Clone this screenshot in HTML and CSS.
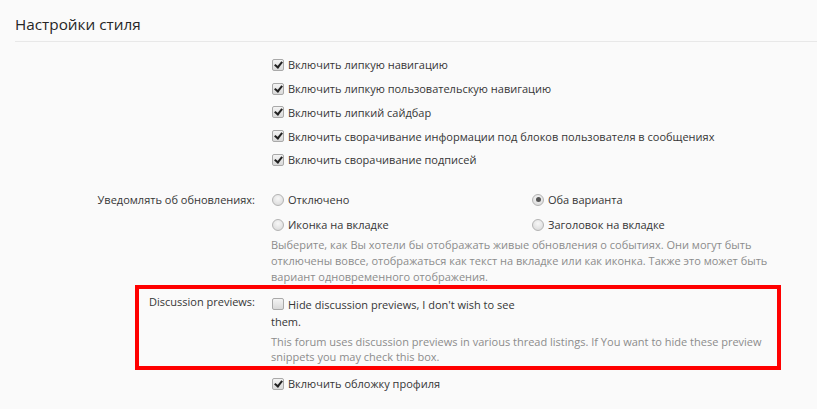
FILE: index.html
```html
<!DOCTYPE html>
<html lang="ru">
<head>
<meta charset="utf-8">
<link rel="stylesheet" href="styles.css">
</head>
<body>
<div class="page">
  <h2 class="heading">Настройки стиля</h2>
  <dl class="ctrl">
    <dt></dt>
    <dd>
      <ul class="checks">
        <li><span class="cb on"></span>Включить липкую навигацию</li>
        <li><span class="cb on"></span>Включить липкую пользовательскую навигацию</li>
        <li><span class="cb on"></span>Включить липкий сайдбар</li>
        <li><span class="cb on"></span>Включить сворачивание информации под блоков пользователя в сообщениях</li>
        <li><span class="cb on"></span>Включить сворачивание подписей</li>
      </ul>
    </dd>
  </dl>
  <dl class="ctrl notify">
    <dt>Уведомлять об обновлениях:</dt>
    <dd>
      <div class="radios">
        <div class="ropt"><span class="rb"></span>Отключено</div>
        <div class="ropt"><span class="rb on"></span>Оба варианта</div>
        <div class="ropt"><span class="rb"></span>Иконка на вкладке</div>
        <div class="ropt"><span class="rb"></span>Заголовок на вкладке</div>
      </div>
      <p class="explain">Выберите, как Вы хотели бы отображать живые обновления о событиях. Они могут быть отключены вовсе, отображаться как текст на вкладке или как иконка. Также это может быть вариант одновременного отображения.</p>
    </dd>
  </dl>
  <dl class="ctrl highlight">
    <dt>Discussion previews:</dt>
    <dd>
      <div class="narrow"><span class="cb"></span>Hide discussion previews, I don't wish to see them.</div>
      <p class="explain">This forum uses discussion previews in various thread listings. If You want to hide these preview snippets you may check this box.</p>
    </dd>
  </dl>
  <dl class="ctrl last">
    <dt></dt>
    <dd>
      <div class="single"><span class="cb on"></span>Включить обложку профиля</div>
    </dd>
  </dl>
</div>
</body>
</html>
```

FILE: styles.css
```css
html, body {
  margin: 0;
  padding: 0;
  background: #fafafa;
}
body {
  font-family: "Open Sans", "Noto Sans", sans-serif;
  font-size: 11px;
  color: #363636;
}
.page {
  padding: 0 0 0 15px;
}
.heading {
  margin: 0;
  padding: 15px 0 7px;
  height: 19px;
  line-height: 19px;
  font-size: 15.3px;
  font-weight: 400;
  color: #262626;
  border-bottom: 1px solid #e8e8e8;
}
.ctrl {
  display: grid;
  grid-template-columns: 240px 1fr;
  column-gap: 16px;
  margin: 0;
}
.ctrl dt {
  text-align: right;
  line-height: 16px;
}
.ctrl dd {
  margin: 0;
}
.checks {
  list-style: none;
  margin: 0;
  padding: 11px 0 0;
}
.checks li {
  height: 23.75px;
  display: flex;
  align-items: center;
}
.cb {
  width: 10px;
  height: 10px;
  border: 1px solid #a9a9a9;
  border-radius: 2px;
  background: linear-gradient(#f4f4f4, #d9d9d9);
  margin: 0 4px 0 1px;
  flex: none;
  position: relative;
}
.cb.on::after {
  content: "";
  position: absolute;
  left: 3px;
  top: 0;
  width: 3px;
  height: 6px;
  border: solid #222;
  border-width: 0 2px 2px 0;
  transform: rotate(38deg);
}
.notify {
  margin-top: 18px;
}
.notify dt {
  padding-top: 2px;
}
.radios {
  display: grid;
  grid-template-columns: 260px 1fr;
  row-gap: 5px;
}
.ropt {
  display: flex;
  align-items: center;
  height: 20px;
  padding-left: 1px;
}
.rb {
  width: 10px;
  height: 10px;
  border-radius: 50%;
  border: 1px solid #b3b3b3;
  background: radial-gradient(circle at 50% 35%, #f7f7f7, #d6d6d6);
  margin-right: 4px;
  flex: none;
  position: relative;
}
.rb.on::after {
  content: "";
  position: absolute;
  left: 2.5px;
  top: 2.5px;
  width: 5px;
  height: 5px;
  border-radius: 50%;
  background: #555;
}
.explain {
  margin: 2px 0 0;
  max-width: 502px;
  color: #8c8c8c;
  line-height: 16px;
}
.highlight {
  margin: 0 36px 0 120px;
  border: 4px solid #f00;
  padding: 5px 0 2px;
  grid-template-columns: 116px 1fr;
}
.narrow {
  width: 250px;
  line-height: 17px;
  padding-top: 2px;
}
.narrow .cb {
  display: inline-block;
  vertical-align: -1px;
  margin-right: 4px;
}
.highlight .explain {
  margin-top: 4px;
  line-height: 15px;
  max-width: 496px;
}
.last {
  margin-top: 4px;
}
.single {
  display: flex;
  align-items: center;
  height: 20px;
}
```
